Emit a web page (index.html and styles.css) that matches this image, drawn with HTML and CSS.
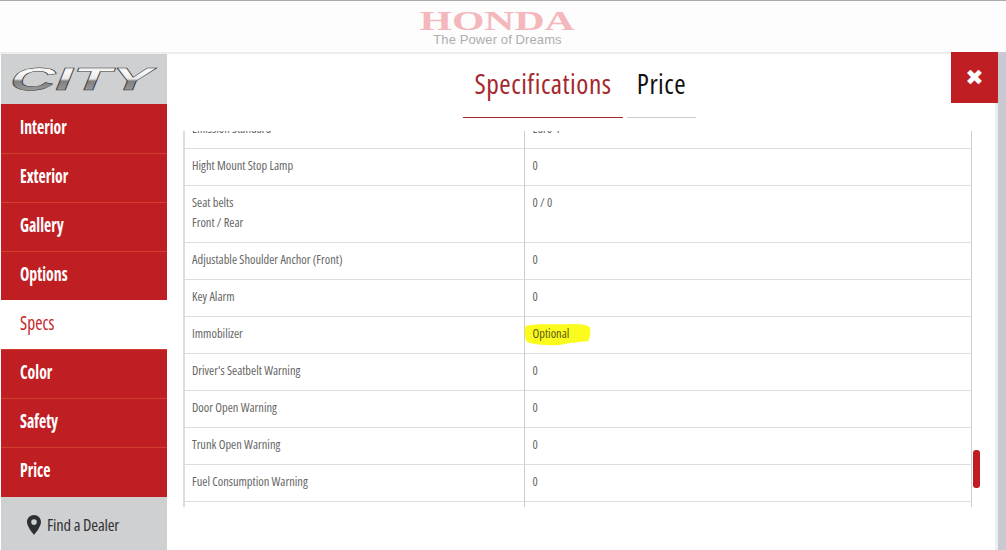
FILE: index.html
```html
<!DOCTYPE html>
<html lang="en">
<head>
<meta charset="utf-8">
<title>Honda City Specifications</title>
<link rel="stylesheet" href="styles.css">
</head>
<body>
<header class="brand">
  <div class="brand-mark">HONDA</div>
  <div class="brand-tag">The Power of Dreams</div>
</header>
<div class="shell">
  <aside class="sidebar">
    <div class="model">
      <svg class="model-logo" width="150" height="38" viewBox="0 0 150 38" role="img" aria-label="City">
        <defs>
          <linearGradient id="chrome" x1="0" y1="0" x2="0" y2="1">
            <stop offset="0" stop-color="#d8d8d8"/>
            <stop offset=".3" stop-color="#fafafa"/>
            <stop offset=".5" stop-color="#e8e8e8"/>
            <stop offset=".56" stop-color="#808080"/>
            <stop offset="1" stop-color="#a8a8a8"/>
          </linearGradient>
        </defs>
        <text class="model-text" x="8" y="30" textLength="142" lengthAdjust="spacingAndGlyphs" transform="skewX(-22)">CITY</text>
      </svg>
    </div>
    <nav class="menu">
      <a class="menu-item"><span>Interior</span></a>
      <a class="menu-item"><span>Exterior</span></a>
      <a class="menu-item"><span>Gallery</span></a>
      <a class="menu-item"><span>Options</span></a>
      <a class="menu-item is-active"><span>Specs</span></a>
      <a class="menu-item"><span>Color</span></a>
      <a class="menu-item"><span>Safety</span></a>
      <a class="menu-item"><span>Price</span></a>
    </nav>
    <a class="dealer">
      <svg class="pin" width="14" height="20" viewBox="0 0 14 20"><path fill-rule="evenodd" d="M7 0C3.100 0 0 3.100 0 7c0 4.400 5 10.400 7 13 2-2.600 7-8.600 7-13 0-3.900-3.100-7-7-7zm0 4.300a2.800 2.800 0 1 1 0 5.600 2.800 2.800 0 0 1 0-5.600z"/></svg>
      <span>Find a Dealer</span>
    </a>
  </aside>
  <main class="content">
    <div class="tabs">
      <a class="tab is-current"><span>Specifications</span></a>
      <a class="tab"><span>Price</span></a>
    </div>
    <div class="scroller">
      <table class="spec">
        <tr><td>Emission Standard</td><td>Euro 4</td></tr>
        <tr><td>Hight Mount Stop Lamp</td><td>0</td></tr>
        <tr><td>Seat belts<br>Front / Rear</td><td>0 / 0</td></tr>
        <tr><td>Adjustable Shoulder Anchor (Front)</td><td>0</td></tr>
        <tr><td>Key Alarm</td><td>0</td></tr>
        <tr><td>Immobilizer</td><td class="marked">
          <svg class="marker" width="67" height="25" viewBox="0 0 68 26" preserveAspectRatio="none"><path d="M2 4 C14 1 34 3 50 2 C58 2 65 3 67 6 C68 11 67 17 65 20 C52 21 44 22 36 24 C24 25 10 23 3 21 C0 14 0 8 2 4Z"/></svg>
          <span class="marked-text">Optional</span></td></tr>
        <tr><td>Driver's Seatbelt Warning</td><td>0</td></tr>
        <tr><td>Door Open Warning</td><td>0</td></tr>
        <tr><td>Trunk Open Warning</td><td>0</td></tr>
        <tr><td>Fuel Consumption Warning</td><td>0</td></tr>
        <tr><td>&nbsp;</td><td>&nbsp;</td></tr>
      </table>
      <div class="thumb"></div>
    </div>
    <button class="close" aria-label="Close">&#10006;</button>
  </main>
  <div class="edge"></div>
</div>
</body>
</html>
```

FILE: styles.css
```css
* { box-sizing: border-box; }
html, body { height: 100%; }
body {
  margin: 0;
  height: 550px;
  overflow: hidden;
  background: #fff;
  font-family: "Open Sans", "Liberation Sans", sans-serif;
  font-stretch: 75%;
  color: #444;
}
.brand {
  height: 54px;
  border-top: 1px solid #aaa;
  border-bottom: 2px solid #eee;
  display: flex;
  flex-direction: column;
  align-items: center;
  padding: 10px 11px 0 0;
  background: #fdfdfd;
}
.brand-mark {
  font-family: "Liberation Serif", serif;
  font-weight: 700;
  font-size: 28px;
  line-height: 20px;
  color: #f4b8bc;
  transform: scale(1.49, 1);
}
.brand-tag {
  font-family: "Liberation Sans", sans-serif;
  font-stretch: normal;
  font-size: 13px;
  letter-spacing: .1px;
  line-height: 14px;
  color: #aeaeae;
  margin-top: 2px;
}
.shell {
  display: flex;
  height: 496px;
  padding-left: 1px;
}
.sidebar {
  width: 166px;
  flex: none;
  display: flex;
  flex-direction: column;
}
.model {
  height: 50px;
  background: #cfd0d2;
  padding: 6px 0 0 10px;
}
.model-logo { display: block; overflow: visible; }
.model-text {
  font-family: "Liberation Sans", sans-serif;
  font-stretch: normal;
  font-weight: 700;
  font-size: 32px;
  fill: url(#chrome);
  stroke: #333;
  stroke-width: .5;
}
.menu { display: flex; flex-direction: column; }
.menu-item {
  height: 49px;
  background: #bf1e23;
  border-top: 1px solid #d23f30;
  color: #fff;
  font-weight: 700;
  font-size: 19px;
  padding: 0 0 4px 19px;
  display: flex;
  align-items: center;
}
.menu-item span { display: inline-block; transform: scaleX(.83); transform-origin: left center; }
.menu-item:first-child { border-top-color: #bf1e23; }
.menu-item:last-child { height: 50px; padding-bottom: 6px; }
.menu-item.is-active { background: #fff; color: #c5252a; font-weight: 400; border-top-color: #fff; }
.menu-item.is-active span { transform: scaleX(.92); }
.dealer {
  flex: 1;
  background: #cfd0d2;
  color: #333;
  font-size: 16.500px;
  letter-spacing: -.2px;
  display: flex;
  align-items: center;
  gap: 6px;
  padding: 2px 0 0 26px;
}
.pin { fill: #2e3133; flex: none; }
.content {
  flex: 1;
  position: relative;
  min-width: 0;
  display: flex;
  flex-direction: column;
  padding-left: 16px;
}
.tabs {
  height: 64px;
  flex: none;
  display: flex;
  padding-left: 280px;
  gap: 4px;
}
.tab {
  height: 64px;
  border-bottom: 1px solid #ccc;
  font-size: 27.500px;
  letter-spacing: .5px;
  color: #111;
  display: flex;
  align-items: center;
  justify-content: center;
  width: 69px;
  padding-bottom: 5px;
}
.tab.is-current { width: 160px; color: #a5282e; border-bottom-color: #ad2a30; }
.scroller {
  position: relative;
  margin-top: 13px;
  height: 376px;
  width: 789px;
  clip-path: inset(0 -20px 0 0);
}
.spec {
  width: 789px;
  margin-top: -19px;
  border-collapse: collapse;
  table-layout: fixed;
  border-left: 2px solid #ddd;
  border-right: 1px solid #ccc;
  font-size: 12.400px;
  line-height: 20px;
}
.spec td {
  padding: 7px 8px 9px;
  vertical-align: top;
  border-bottom: 1px solid #ddd;
  color: #666;
}
.spec td:first-child { width: 340px; padding-left: 7px; border-right: 1px solid #ccc; }
.marked { position: relative; }
.marked-text { position: relative; color: #5c5a10; }
.marker { position: absolute; left: -1px; top: 5px; fill: #fbfb1e; }
.thumb {
  position: absolute;
  left: 790px;
  top: 319px;
  width: 7px;
  height: 38px;
  border-radius: 3px;
  background: #c01c24;
}
.close {
  position: absolute;
  top: -2px;
  right: -3px;
  width: 47px;
  height: 51px;
  border: 0;
  padding: 0;
  background: #bf1e23;
  color: #fff;
  font-size: 22px;
  font-family: "DejaVu Sans", sans-serif;
  font-stretch: normal;
}
.edge { width: 11px; flex: none; background: #c8c9d2; border-left: 3px solid #eee; margin-top: -2px; }
```
